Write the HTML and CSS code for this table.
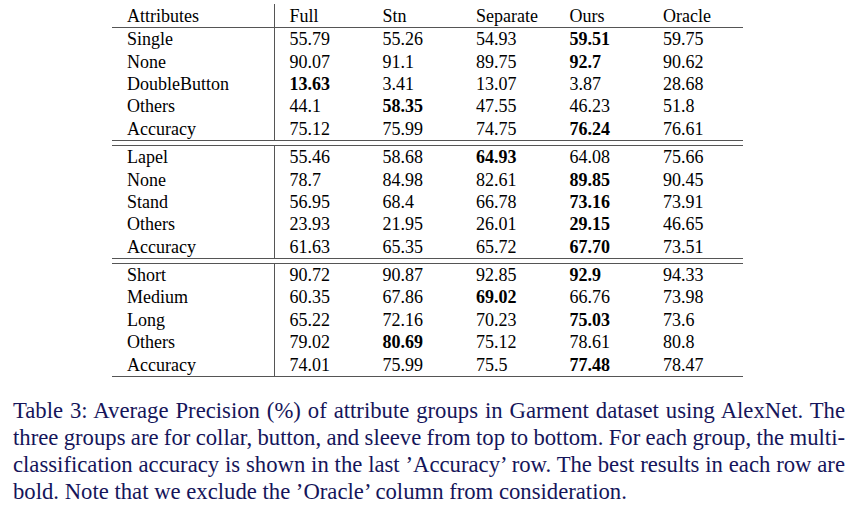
FILE: index.html
```html
<!DOCTYPE html>
<html>
<head>
<meta charset="utf-8">
<link rel="stylesheet" href="styles.css">
</head>
<body>
<div class="page">
  <table class="results">
    <colgroup>
      <col class="c-attr"><col class="c-num"><col class="c-num"><col class="c-num"><col class="c-num"><col class="c-last">
    </colgroup>
    <thead>
      <tr class="head"><th class="attr">Attributes</th><th>Full</th><th>Stn</th><th>Separate</th><th>Ours</th><th>Oracle</th></tr>
    </thead>
    <tbody>
      <tr><td class="attr">Single</td><td>55.79</td><td>55.26</td><td>54.93</td><td><b>59.51</b></td><td>59.75</td></tr>
      <tr><td class="attr">None</td><td>90.07</td><td>91.1</td><td>89.75</td><td><b>92.7</b></td><td>90.62</td></tr>
      <tr><td class="attr">DoubleButton</td><td><b>13.63</b></td><td>3.41</td><td>13.07</td><td>3.87</td><td>28.68</td></tr>
      <tr><td class="attr">Others</td><td>44.1</td><td><b>58.35</b></td><td>47.55</td><td>46.23</td><td>51.8</td></tr>
      <tr><td class="attr">Accuracy</td><td>75.12</td><td>75.99</td><td>74.75</td><td><b>76.24</b></td><td>76.61</td></tr>
      <tr class="sep"><td colspan="6"></td></tr>
      <tr><td class="attr">Lapel</td><td>55.46</td><td>58.68</td><td><b>64.93</b></td><td>64.08</td><td>75.66</td></tr>
      <tr><td class="attr">None</td><td>78.7</td><td>84.98</td><td>82.61</td><td><b>89.85</b></td><td>90.45</td></tr>
      <tr><td class="attr">Stand</td><td>56.95</td><td>68.4</td><td>66.78</td><td><b>73.16</b></td><td>73.91</td></tr>
      <tr><td class="attr">Others</td><td>23.93</td><td>21.95</td><td>26.01</td><td><b>29.15</b></td><td>46.65</td></tr>
      <tr><td class="attr">Accuracy</td><td>61.63</td><td>65.35</td><td>65.72</td><td><b>67.70</b></td><td>73.51</td></tr>
      <tr class="sep"><td colspan="6"></td></tr>
      <tr><td class="attr">Short</td><td>90.72</td><td>90.87</td><td>92.85</td><td><b>92.9</b></td><td>94.33</td></tr>
      <tr><td class="attr">Medium</td><td>60.35</td><td>67.86</td><td><b>69.02</b></td><td>66.76</td><td>73.98</td></tr>
      <tr><td class="attr">Long</td><td>65.22</td><td>72.16</td><td>70.23</td><td><b>75.03</b></td><td>73.6</td></tr>
      <tr><td class="attr">Others</td><td>79.02</td><td><b>80.69</b></td><td>75.12</td><td>78.61</td><td>80.8</td></tr>
      <tr class="last"><td class="attr">Accuracy</td><td>74.01</td><td>75.99</td><td>75.5</td><td><b>77.48</b></td><td>78.47</td></tr>
    </tbody>
  </table>
  <p class="caption">
    <span class="line">Table 3: Average Precision (%) of attribute groups in Garment dataset using AlexNet. The</span>
    <span class="line">three groups are for collar, button, and sleeve from top to bottom. For each group, the multi-</span>
    <span class="line">classification accuracy is shown in the last &rsquo;Accuracy&rsquo; row. The best results in each row are</span>
    <span class="line end">bold. Note that we exclude the &rsquo;Oracle&rsquo; column from consideration.</span>
  </p>
</div>
</body>
</html>
```

FILE: styles.css
```css
html, body {
  margin: 0;
  padding: 0;
  background: #ffffff;
}

.page {
  width: 857px;
  height: 513px;
  padding-top: 4px;
  box-sizing: border-box;
  font-family: "Liberation Serif", "Times New Roman", serif;
  color: #000000;
}

.results {
  margin-left: 112px;
  width: 631px;
  border-collapse: collapse;
  table-layout: fixed;
  font-size: 18px;
}

.c-attr { width: 162px; }
.c-num { width: 93.5px; }
.c-last { width: 95px; }

.results th,
.results td {
  padding: 0 0 0 15px;
  height: 22.4px;
  line-height: 22px;
  text-align: left;
  font-weight: normal;
  white-space: nowrap;
  vertical-align: middle;
}

.results b {
  font-weight: bold;
}

.results .attr {
  border-right: 1px solid #555555;
}

.results thead th {
  height: 23px;
  border-bottom: 1px solid #555555;
}

.results tr.sep td {
  height: 4px;
  padding: 0;
  border-top: 1px solid #555555;
  border-bottom: 1px solid #555555;
}

.results tr.last td {
  border-bottom: 1px solid #555555;
}

.caption {
  margin: 20px 0 0 13px;
  width: 832px;
  font-size: 22.7px;
  line-height: 27px;
  color: #15155a;
}

.caption .line {
  display: block;
  white-space: nowrap;
  word-spacing: -4px;
  text-align: justify;
  text-align-last: justify;
}

.caption .line.end {
  word-spacing: 0;
  text-align-last: left;
}
```
